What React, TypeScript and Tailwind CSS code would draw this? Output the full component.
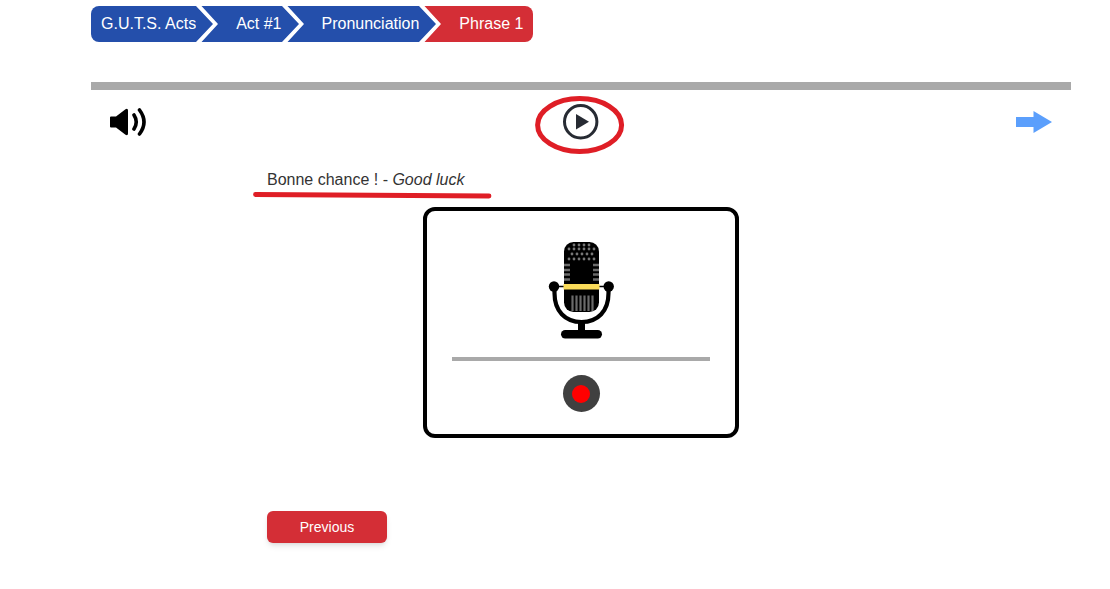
import React from 'react';

type Crumb = { label: string; href: string; current?: boolean };

const crumbs: Crumb[] = [
  { label: 'G.U.T.S. Acts', href: '#acts' },
  { label: 'Act #1', href: '#act-1' },
  { label: 'Pronunciation', href: '#pronunciation' },
  { label: 'Phrase 1', href: '#phrase-1', current: true },
];

const Chevron = ({ next }: { next: string }) => (
  <svg viewBox="0 0 22 36" className="w-[22px] h-9 shrink-0 bg-[#244fab]" aria-hidden="true">
    <path d="M3 0H22V36H3L20 18Z" fill={next} />
    <path d="M0 0H5.5L22 18L5.5 36H0L17 18Z" fill="#fff" />
  </svg>
);

const Breadcrumb = () => (
  <nav aria-label="Breadcrumb">
    <ol className="flex w-fit h-9 rounded-lg overflow-hidden text-base text-white">
      {crumbs.map((c, i) => {
        const next = crumbs[i + 1];
        return (
          <li key={c.label} className="flex">
            <a
              href={c.href}
              aria-current={c.current ? 'page' : undefined}
              className={`flex items-center whitespace-nowrap pb-px ${i === 0 ? 'pl-[10px]' : 'pl-[18px]'} ${c.current ? 'bg-[#d42e36] pr-[10px]' : 'bg-[#244fab]'}`}
            >
              {c.label}
            </a>
            {next && <Chevron next={next.current ? '#d42e36' : '#244fab'} />}
          </li>
        );
      })}
    </ol>
  </nav>
);

const SpeakerIcon = () => (
  <svg viewBox="0 0 36 30" className="w-9 h-[30px]" aria-hidden="true">
    <path d="M1 9.5H6L15.5 2.2Q18 1 18 3.5V26.5Q18 29 15.5 27.8L6 20.5H1Q0 20.5 0 19.5V10.5Q0 9.5 1 9.5Z" fill="#000" />
    <path d="M24 8Q28.5 15 24 22M29.5 3Q38.5 15 29.5 27" fill="none" stroke="#000" strokeWidth="3.6" strokeLinecap="round" />
  </svg>
);

const PlayIcon = () => (
  <svg viewBox="0 0 36 36" className="w-9 h-9" aria-hidden="true">
    <circle cx="17.7" cy="17.8" r="16.2" fill="#fff" stroke="#272b33" strokeWidth="3" />
    <path d="M13 10L26 17.8L13 25.6Z" fill="#272b33" />
  </svg>
);

const ArrowIcon = () => (
  <svg viewBox="0 0 36 22" className="w-9 h-[22px]" aria-hidden="true">
    <path d="M0 6H17.5V0L36 11L17.5 22V16H0Z" fill="#5b9ffc" />
  </svg>
);

const dots = [
  { y: 3, xs: [25, 30, 35, 40] },
  { y: 7, xs: [20, 25, 30, 35, 40, 45] },
  { y: 12, xs: [23, 28, 33, 38, 43] },
  { y: 17, xs: [20, 25, 30, 35, 40, 45] },
];

const MicIcon = () => (
  <svg viewBox="0 0 66 98" className="w-[66px] h-[98px]" aria-hidden="true">
    <path d="M6.5 45V52C6.5 70 17 81 33.5 81S60.5 70 60.5 52V45" fill="none" stroke="#000" strokeWidth="4.2" />
    <circle cx="6" cy="45.5" r="5.2" />
    <circle cx="60.7" cy="45.5" r="5.2" />
    <path d="M6 45.5H60" stroke="#000" strokeWidth="1.6" />
    <rect x="16" y="1" width="35" height="70" rx="9.5" />
    <rect x="30" y="80" width="7" height="12" />
    <rect x="13" y="89" width="41" height="8.5" rx="4.2" />
    {dots.map(row => row.xs.map(x => (
      <circle key={`${row.y}-${x}`} cx={x + 1} cy={row.y + 1} r="1.4" fill="#777" />
    )))}
    {[24, 29, 33.5, 38.5].map(y => (
      <path key={y} d={`M16 ${y}H22M45 ${y}H51`} stroke="#6b6b6b" strokeWidth="2.4" />
    ))}
    <rect x="15.5" y="43" width="36" height="5.5" fill="#fbdc5a" />
    {[24.5, 28.5, 32.5, 36.5, 40.5, 44.5].map(x => (
      <path key={x} d={`M${x} 54.5V70`} stroke="#6b6b6b" strokeWidth="2.2" />
    ))}
  </svg>
);

const Toolbar = () => (
  <div className="flex items-center justify-between px-[19px] h-16">
    <button type="button" aria-label="Listen"><SpeakerIcon /></button>
    <div className="relative flex items-center justify-center">
      <button type="button" aria-label="Play phrase"><PlayIcon /></button>
      <svg viewBox="0 0 90 60" className="absolute -inset-x-7 -top-[9px] w-[90px] h-[60px] pointer-events-none" aria-hidden="true">
        <ellipse cx="44.6" cy="30" rx="42" ry="26.5" fill="none" stroke="#df1e26" strokeWidth="5" />
      </svg>
    </div>
    <button type="button" aria-label="Next phrase"><ArrowIcon /></button>
  </div>
);

const Recorder = () => (
  <section aria-label="Recorder" className="flex flex-col items-center w-[316px] mx-auto border-4 border-black rounded-xl pt-[30px] pb-[22px] px-[25px]">
    <MicIcon />
    <hr className="w-full mt-[18px] mb-[14px] border-0 h-1 bg-[#a9a9a9]" />
    <button type="button" aria-label="Record" className="flex items-center justify-center size-[37px] rounded-full bg-[#404040]">
      <span className="size-[18px] rounded-full bg-[#ff0000]" />
    </button>
  </section>
);

const App: React.FC = () => {
  return (
    <div className="min-h-screen bg-white pl-[91px] pr-[39px] pt-[6px] pb-10 font-['Liberation_Sans',Arial,sans-serif] text-[#333]">
      <Breadcrumb />
      <main className="mt-10">
        <hr className="border-0 h-2 bg-[#a9a9a9]" />
        <Toolbar />
        <div className="px-44 pt-[14px]">
          <p className="relative w-fit text-base leading-6 mb-[15px]">
            Bonne chance ! - <em>Good luck</em>
            <svg viewBox="0 0 240 8" className="absolute -left-[14px] top-[23px] w-[240px] h-2 pointer-events-none" aria-hidden="true">
              <path d="M2.5 3.5L236 5" stroke="#df1e26" strokeWidth="4.8" strokeLinecap="round" />
            </svg>
          </p>
          <Recorder />
          <button type="button" className="block w-[120px] h-8 mt-[73px] rounded-md bg-[#d42e36] text-sm text-white shadow-md">
            Previous
          </button>
        </div>
      </main>
    </div>
  );
};

export default App;
